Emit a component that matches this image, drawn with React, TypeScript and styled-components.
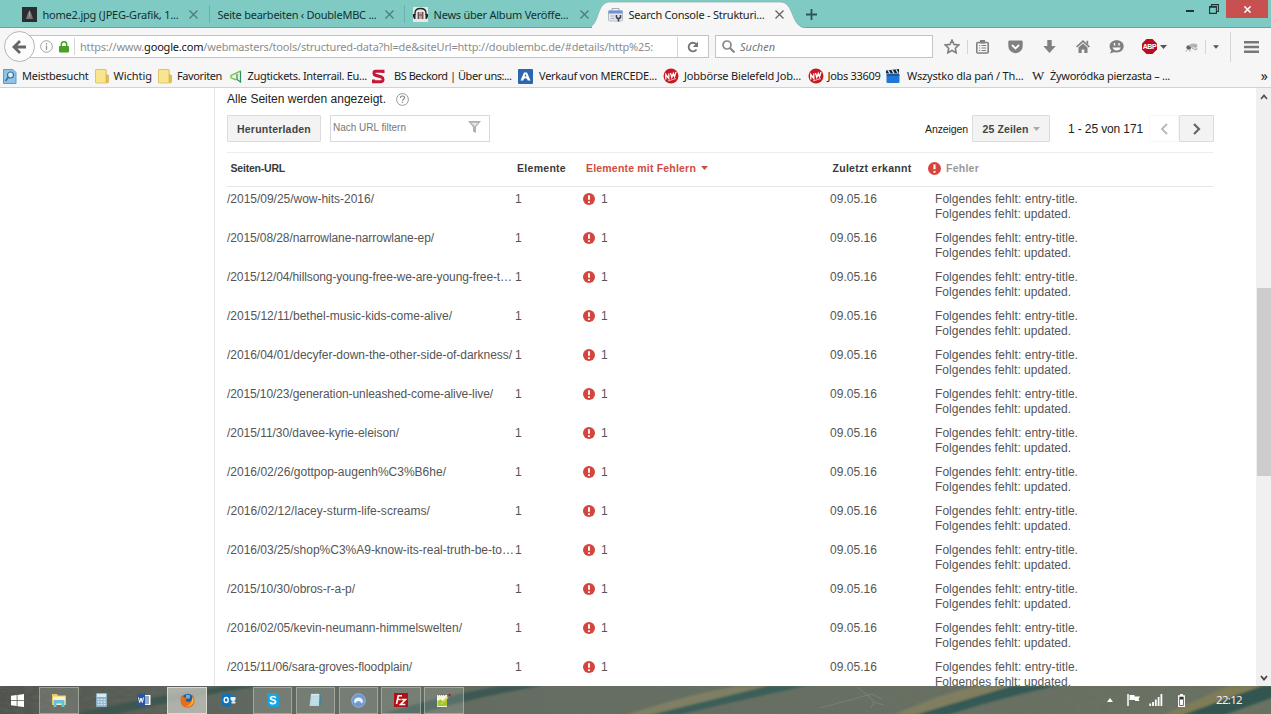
import React, { useLayoutEffect, useRef, useState } from 'react';
import styled, { createGlobalStyle, css } from 'styled-components';

const GlobalStyle = createGlobalStyle`
  * { box-sizing: border-box; }
  html, body { margin: 0; padding: 0; overflow: hidden; background: #fff; }
  svg { display: block; flex: none; }
`;

const ui = `'Noto Sans', 'Open Sans', sans-serif`;
const web = `'Liberation Sans', Arial, sans-serif`;

/* ---------- text that keeps a given run width ---------- */

const Run = styled.span<{ $w: number }>`
  display: block;
  flex: none;
  width: ${p => p.$w}px;
  white-space: pre;
`;

function Fit({ w, children }: { w: number; children: React.ReactNode }) {
  const ref = useRef<HTMLSpanElement>(null);
  const [spacing, setSpacing] = useState(0);
  useLayoutEffect(() => {
    const el = ref.current;
    if (!el) return;
    const range = document.createRange();
    range.selectNodeContents(el);
    const natural = range.getBoundingClientRect().width;
    const count = (el.textContent || '').length;
    if (count > 1) setSpacing(s => s + (w - natural) / count);
  }, [w]);
  return <Run ref={ref} $w={w} style={{ letterSpacing: spacing }}>{children}</Run>;
}

/* ---------- window frame ---------- */

const Window = styled.div`
  width: 1271px;
  height: 714px;
  display: flex;
  flex-direction: column;
  overflow: hidden;
  background: #fff;
`;

const TabStrip = styled.div`
  height: 28px;
  flex: none;
  display: flex;
  background: #7fcbc4;
  border-bottom: 1px solid #68a39e;
  font: 11px/27px ${ui};
  color: #12302e;
`;

const Tab = styled.div<{ $w: number; $pad: number; $line?: boolean }>`
  width: ${p => p.$w}px;
  height: 27px;
  padding: 1px 10px 0 ${p => p.$pad}px;
  display: flex;
  align-items: center;
  ${p => p.$line && css`
    background: linear-gradient(#68b2ac, #68b2ac) right 5px / 1px 18px no-repeat;
  `}
`;

const TabIcon = styled.span`
  width: 20.5px;
  flex: none;
`;

const TabClose = styled.span<{ $gap: number }>`
  margin-left: ${p => p.$gap}px;
`;

const ActiveTab = styled.div`
  width: 214px;
  height: 28px;
  display: grid;
  color: #222;
  > * { grid-area: 1 / 1; }
`;

const ActiveContent = styled.div`
  display: flex;
  align-items: center;
  padding: 0 0 0 16px;
`;

const NewTab = styled.div`
  padding: 9px 0 0 0;
  flex: 1;
`;

const WindowButtons = styled.div`
  display: flex;
  height: 18px;
`;

const WinButton = styled.div<{ $w: number; $close?: boolean }>`
  width: ${p => p.$w}px;
  display: flex;
  align-items: center;
  justify-content: center;
  background: ${p => (p.$close ? '#c75050' : 'transparent')};
`;

/* ---------- toolbar ---------- */

const Toolbar = styled.div`
  height: 37px;
  flex: none;
  display: flex;
  align-items: center;
  background: #f6f6f6;
  padding-left: 4px;
  font: 11px/20px ${ui};
`;

const Back = styled.div`
  width: 31px;
  height: 31px;
  border: 1px solid #b5b5b5;
  border-radius: 50%;
  background: #fcfcfc;
  display: flex;
  align-items: center;
  justify-content: center;
  z-index: 1;
`;

const AddressBar = styled.div`
  width: 682px;
  height: 23px;
  margin-left: -8px;
  padding-left: 12px;
  border: 1px solid #c3c3c3;
  background: #fff;
  display: flex;
  align-items: center;
  color: #8d8d8d;
  b { font-weight: 400; color: #111; }
`;

const Divider = styled.span<{ $h: number; $m?: string }>`
  width: 1px;
  height: ${p => p.$h}px;
  margin: ${p => p.$m || '0'};
  background: #d5d5d5;
  flex: none;
`;

const Search = styled.div`
  width: 218px;
  height: 23px;
  margin: 0 4px 0 6px;
  padding-left: 6px;
  border: 1px solid #c3c3c3;
  background: #fff;
  display: flex;
  align-items: center;
  gap: 5px;
  color: #757575;
  font-style: italic;
`;

const Slot = styled.div<{ $w: number; $gap?: number }>`
  width: ${p => p.$w}px;
  display: flex;
  align-items: center;
  justify-content: center;
  gap: ${p => p.$gap || 0}px;
  flex: none;
`;

const Badge = styled.span`
  width: 15px;
  height: 15px;
  background: #bb0d1c;
  color: #fff;
  font: 700 7px/15px ${web};
  letter-spacing: -0.4px;
  text-align: center;
  clip-path: polygon(30% 0, 70% 0, 100% 30%, 100% 70%, 70% 100%, 30% 100%, 0 70%, 0 30%);
`;

/* ---------- bookmarks ---------- */

const Bookmarks = styled.div`
  height: 23px;
  flex: none;
  display: flex;
  align-items: center;
  padding-left: 3px;
  background: #f6f6f6;
  border-bottom: 1px solid #d2d2d2;
  font: 11px/20px ${ui};
  color: #1c1c1c;
`;

const Bookmark = styled.div<{ $w: number }>`
  width: ${p => p.$w}px;
  flex: none;
  display: flex;
  align-items: center;
`;

const BookmarkIcon = styled.span<{ $w: number }>`
  width: ${p => p.$w}px;
  flex: none;
`;

const More = styled.span`
  margin-left: auto;
  padding-right: 3px;
  font-size: 14px;
`;

/* ---------- page ---------- */

const Page = styled.div`
  height: 598px;
  flex: none;
  display: flex;
  overflow: hidden;
  font-family: ${web};
`;

const Sidebar = styled.div`
  width: 215px;
  border-right: 1px solid #e6e6e6;
`;

const Main = styled.div`
  width: 1041px;
  padding: 2px 0 0 12px;
`;

const Intro = styled.div`
  height: 18px;
  display: flex;
  align-items: center;
  gap: 10px;
  font-size: 12px;
  color: #222;
`;

const Controls = styled.div`
  height: 43px;
  width: 987px;
  display: flex;
  align-items: center;
  padding-bottom: 2px;
  font-size: 10.5px;
  color: #222;
`;

const Button = styled.div<{ $w: number; $plain?: boolean }>`
  width: ${p => p.$w}px;
  height: 27px;
  flex: none;
  display: flex;
  align-items: center;
  justify-content: center;
  gap: 4px;
  border: 1px solid ${p => (p.$plain ? '#f7f7f7' : '#dcdcdc')};
  border-radius: 1px;
  background: ${p => (p.$plain ? '#fff' : '#f3f3f3')};
  font-weight: 700;
  color: #444;
`;

const Filter = styled.div`
  width: 160px;
  height: 27px;
  margin-left: 9px;
  padding: 0 8px 3px 2px;
  display: flex;
  align-items: center;
  justify-content: space-between;
  border: 1px solid #d9d9d9;
  font-size: 10px;
  color: #777;
`;

const Pager = styled.div`
  margin-left: auto;
  display: flex;
  align-items: center;
`;

const Count = styled.div`
  margin: 0 6px 0 18px;
  font-size: 12px;
`;

const columns = '288px 67px 248px 104px 1fr';

const TableHead = styled.div`
  width: 986px;
  height: 35px;
  margin-top: 1px;
  padding-bottom: 3px;
  display: grid;
  grid-template-columns: ${columns};
  align-items: center;
  border-top: 1px solid #ececec;
  border-bottom: 1px solid #e6e6e6;
  font-size: 10.5px;
  font-weight: 700;
  color: #3a3a3a;
`;

const HeadCell = styled.div<{ $pad: number; $color?: string }>`
  display: flex;
  align-items: center;
  gap: 5px;
  padding-left: ${p => p.$pad}px;
  color: ${p => p.$color || 'inherit'};
`;

const ErrorHead = styled(HeadCell)`
  margin-left: -6px;
`;

const Rows = styled.div`
  padding-top: 4.6px;
`;

const Row = styled.div`
  height: 39px;
  display: grid;
  grid-template-columns: ${columns};
  font-size: 12px;
  line-height: 15px;
  color: #555;
`;

const Cell = styled.div<{ $pad?: number }>`
  padding-left: ${p => p.$pad || 0}px;
`;

const ErrorCount = styled.div`
  height: 15px;
  display: flex;
  align-items: center;
  gap: 6px;
  padding-left: 1px;
`;

const Scrollbar = styled.div`
  width: 15px;
  background: #f0f0f0;
  display: flex;
  flex-direction: column;
  align-items: center;
  padding: 6px 0 5px;
`;

const Track = styled.div`
  flex: 1;
  width: 14px;
  padding-top: 188px;
`;

const Thumb = styled.div`
  height: 188px;
  background: #cdcdcd;
`;

/* ---------- taskbar ---------- */

const Taskbar = styled.div`
  height: 28px;
  flex: none;
  display: grid;
  > * { grid-area: 1 / 1; min-width: 0; }
`;

const TaskContent = styled.div`
  display: flex;
  align-items: center;
  z-index: 1;
`;

const Task = styled.div<{ $state?: 'open' | 'active' }>`
  width: 39.5px;
  height: 27px;
  margin-right: 3.3px;
  flex: none;
  display: flex;
  align-items: center;
  justify-content: center;
  border: 1px solid transparent;
  ${p => p.$state === 'open' && css`
    border-color: rgba(205, 209, 200, 0.5);
    background: rgba(190, 195, 185, 0.22);
  `}
  ${p => p.$state === 'active' && css`
    border-color: #dad9d2;
    background: rgba(215, 213, 205, 0.68);
  `}
`;

const Start = styled.div`
  width: 39px;
  padding-left: 10.5px;
`;

const Tray = styled.div`
  margin-left: auto;
  display: flex;
  align-items: center;
  color: #f2f2f2;
  font: 11.5px/28px ${ui};
`;

const TrayItem = styled.div<{ $l: number }>`
  margin-left: ${p => p.$l}px;
`;

/* ---------- drawings ---------- */

const Cross = ({ c = '#4f7d79', s = 9, sw = 1.3 }: { c?: string; s?: number; sw?: number }) => (
  <svg width={s} height={s} viewBox="0 0 9 9"><path d="M.5.5l8 8M8.5.5l-8 8" stroke={c} strokeWidth={sw} /></svg>
);

const Alert = ({ s = 12 }: { s?: number }) => (
  <svg width={s} height={s} viewBox="0 0 12 12">
    <circle cx="6" cy="6" r="6" fill="#d5453d" />
    <path d="M6 2.2v4.6M6 8.2v1.8" stroke="#fff" strokeWidth="1.9" />
  </svg>
);

const Caret = ({ c = '#555', w = 7 }: { c?: string; w?: number }) => (
  <svg width={w} height="4" viewBox="0 0 7 4"><path d="M0 0h7L3.5 4z" fill={c} /></svg>
);

const Folder = () => (
  <svg width="14" height="15" viewBox="0 0 14 15">
    <path d="M1 .8h10v13h1.500q1 0 1-1V6.500l-2-1" fill="#e2bd50" stroke="#d2ae48" strokeWidth=".7" />
    <path d="M.5 1q0-.6.6-.6h9.400q.5 0 .5.600v12.500q0 .5-.5.500H1.100q-.6 0-.6-.6z" fill="#f8e68f" stroke="#d8bb55" strokeWidth=".8" />
  </svg>
);

const Press = () => (
  <svg width="16" height="16" viewBox="0 0 16 16">
    <circle cx="8" cy="8" r="7.500" fill="#c81923" />
    <path d="M2.800 11.500V6.500l3 4V5.500M7.500 5l1.300 4.500L10.300 5.500l1.200 3.300L13 4" fill="none" stroke="#fff" strokeWidth="1.300" />
    <path d="M5 13l8-2.500" stroke="#fff" strokeWidth=".7" />
  </svg>
);

const icons = {
  most: (
    <svg width="14" height="15" viewBox="0 0 14 15">
      <path d="M.5.5h9.500l3 3v11H.5z" fill="#8cc3e6" stroke="#5d9bc4" />
      <circle cx="7.500" cy="6" r="3" fill="#d9effb" stroke="#3a6f9c" strokeWidth="1.200" />
      <path d="M5.500 8l-3 4" stroke="#3a6f9c" strokeWidth="1.600" />
    </svg>
  ),
  rail: (
    <svg width="12" height="13" viewBox="0 0 12 13">
      <path d="M11 1L1 5.500v2.500L11 12z" fill="#e4f5da" />
      <path d="M11 .8L1 5.500v2.300l5 2" fill="none" stroke="#6fbf4b" strokeWidth="1.300" />
      <path d="M10.500 1.500v10.500L7 9.500V4" fill="none" stroke="#2c8f68" strokeWidth="1.200" />
    </svg>
  ),
  bs: (
    <svg width="13" height="15" viewBox="0 0 13 15">
      <path d="M11 4V2.200H3.500Q2 2.200 2 4t1.500 2.200L9.500 8Q11 8.500 11 10.500t-2 2.300H1.500V10.500" fill="none" stroke="#c5163a" strokeWidth="3" />
    </svg>
  ),
  auto: (
    <svg width="15" height="15" viewBox="0 0 15 15">
      <rect width="15" height="15" rx="1" fill="#2d66ae" />
      <path d="M2.500 11.500L6 3.500h3l3.500 8h-2.800L9 9.800Q7.500 8.500 6 9.800l-.7 1.700z" fill="#fff" />
      <path d="M6.500 7.500h2L7.500 5z" fill="#2d66ae" />
    </svg>
  ),
  nw: <Press />,
  clap: (
    <svg width="14" height="14" viewBox="0 0 14 14">
      <rect x=".5" y="5" width="13" height="9" rx="1" fill="#2277d5" />
      <path d="M0 1.500L13 0v4.500H0z" fill="#15233a" />
      <path d="M2 1.300l2 3M6 .9l2 3.400M10 .5l2 3.500" stroke="#dbe8f5" strokeWidth="1.300" />
      <path d="M.5 6h13" stroke="#173d70" />
    </svg>
  ),
  folder: <Folder />,
};

const bookmarks: { icon?: keyof typeof icons; text: string; w: number; off: number; tw: number }[] = [
  { icon: 'most', text: 'Meistbesucht', w: 92, off: 19, tw: 66.5 },
  { icon: 'folder', text: 'Wichtig', w: 63, off: 18.5, tw: 38.500 },
  { icon: 'folder', text: 'Favoriten', w: 72, off: 19, tw: 45 },
  { icon: 'rail', text: 'Zugtickets. Interrail. Eu...', w: 142, off: 17.500, tw: 119.500 },
  { icon: 'bs', text: 'BS Beckord | Über uns:...', w: 146, off: 22, tw: 117.500 },
  { icon: 'auto', text: 'Verkauf von MERCEDE...', w: 145, off: 21, tw: 118 },
  { icon: 'nw', text: 'Jobbörse Bielefeld Job...', w: 145, off: 21, tw: 117 },
  { icon: 'nw', text: 'Jobs 33609', w: 78, off: 19.500, tw: 53 },
  { icon: 'clap', text: 'Wszystko dla pań / Th...', w: 146, off: 21, tw: 116.500 },
  { text: 'Żyworódka pierzasta – ...', w: 150, off: 18, tw: 120 },
];

const Wiki = styled.span`
  font: 13px/18px 'Liberation Serif', serif;
`;

const rows: [string, number][] = [
  ['/2015/09/25/wow-hits-2016/', 147],
  ['/2015/08/28/narrowlane-narrowlane-ep/', 207],
  ['/2015/12/04/hillsong-young-free-we-are-young-free-t…', 285],
  ['/2015/12/11/bethel-music-kids-come-alive/', 225],
  ['/2016/04/01/decyfer-down-the-other-side-of-darkness/', 285],
  ['/2015/10/23/generation-unleashed-come-alive-live/', 266],
  ['/2015/11/30/davee-kyrie-eleison/', 172],
  ['/2016/02/26/gottpop-augenh%C3%B6he/', 219],
  ['/2016/02/12/lacey-sturm-life-screams/', 203],
  ['/2016/03/25/shop%C3%A9-know-its-real-truth-be-to…', 287],
  ['/2015/10/30/obros-r-a-p/', 128],
  ['/2016/02/05/kevin-neumann-himmelswelten/', 235],
  ['/2015/11/06/sara-groves-floodplain/', 185],
];

const Road = () => (
  <svg width="1271" height="28" viewBox="0 0 1271 28">
    <defs>
      <linearGradient id="ground">
        <stop offset="0" stopColor="#50544d" />
        <stop offset=".2" stopColor="#60685f" />
        <stop offset=".45" stopColor="#666e63" />
        <stop offset="1" stopColor="#6a7262" />
      </linearGradient>
      <filter id="soft" x="-5%" y="-20%" width="110%" height="140%"><feGaussianBlur stdDeviation="1.300" /></filter>
      <filter id="grain">
        <feTurbulence type="fractalNoise" baseFrequency=".12 .3" numOctaves="3" seed="4" />
        <feColorMatrix values="0 0 0 0 .12  0 0 0 0 .15  0 0 0 0 .12  .9 0 0 0 -.35" />
      </filter>
    </defs>
    <rect width="1271" height="28" fill="url(#ground)" />
    <rect width="1271" height="28" filter="url(#grain)" />
    <g filter="url(#soft)">
      <path d="M70 29Q150 10 225 0h36Q190 10 112 29z" fill="#3d5650" />
      <path d="M378 29Q440 10 500 0h41Q480 10 415 29z" fill="#3d5952" />
      <path d="M625 29Q690 8 737 0h32L651 29z" fill="#7f7f63" />
      <path d="M650 29L768 0h38Q740 14 678 29z" fill="#3a5f58" />
      <path d="M893 29Q940 8 976 0h36L917 29z" fill="#7f7e60" />
      <path d="M915 29L1012 0h44Q1000 12 947 29z" fill="#365a54" />
      <path d="M1163 29L1228 0h36L1184 29z" fill="#7f7c59" />
      <path d="M1182 29L1262 0h12v11l-50 18z" fill="#33574f" />
    </g>
    <path d="M857 1l17 14-3 7M820 22l52-14 10 5M873 16l11 3" stroke="#84968e" strokeWidth="1" fill="none" opacity=".45" />
  </svg>
);

export default function App() {
  return (
    <Window>
      <GlobalStyle />
      <TabStrip>
        <Tab $w={210} $pad={22} $line>
          <TabIcon>
            <svg width="15" height="15" viewBox="0 0 15 15">
              <rect width="15" height="15" fill="#2b2e30" />
              <path d="M7.500 3l2 4 1.500 5H4l1.500-5z" fill="#777" />
              <path d="M7.500 4v6" stroke="#b39b98" />
            </svg>
          </TabIcon>
          <Fit w={136}>home2.jpg (JPEG-Grafik, 1...</Fit>
          <TabClose $gap={10.5}><Cross /></TabClose>
        </Tab>
        <Tab $w={195} $pad={7.5} $line>
          <Fit w={159}>Seite bearbeiten ‹ DoubleMBC ...</Fit>
          <TabClose $gap={8}><Cross /></TabClose>
        </Tab>
        <Tab $w={187} $pad={8}>
          <TabIcon>
            <svg width="15" height="15" viewBox="0 0 15 15">
              <rect width="15" height="15" fill="#e9e6e6" />
              <path d="M2 8V6q0-4.500 5.500-4.500T13 6v2" fill="none" stroke="#222" strokeWidth="1.300" />
              <path d="M0 7h2.500v5H1.500Q0 11 0 9zM15 7h-2.500v5h1Q15 11 15 9z" fill="#222" />
              <path d="M4 5h7v7H4z" fill="#b9a4a3" />
              <path d="M5.500 5v7M9.500 5v7M5.500 8h4" stroke="#6d5453" />
            </svg>
          </TabIcon>
          <Fit w={135}>News über Album Veröffe...</Fit>
          <TabClose $gap={11}><Cross /></TabClose>
        </Tab>
        <ActiveTab>
          <svg width="216" height="28" viewBox="0 0 216 28">
            <path d="M-6 28C9 28 3 2 18 2H188C203 2 198 28 214 28z" fill="#f6f6f6" />
            <path d="M-6 27.500C9 27.500 3 2 18 2H188C203 2 198 27.500 214 27.500" fill="none" stroke="#8eb5b1" strokeWidth=".8" />
          </svg>
          <ActiveContent>
            <TabIcon>
              <svg width="15" height="15" viewBox="0 0 15 15">
                <path d="M4 4V1.500h7V4" stroke="#a4abb4" fill="none" />
                <rect x=".5" y="4" width="14" height="10" rx="1" fill="#e5e9ef" stroke="#b4bdc9" />
                <path d="M.5 3.500h14v3H.5z" fill="#6f93d2" />
                <path d="M2.500 9h4M2.500 11.500h4" stroke="#a5b0c0" />
                <path d="M8.500 8v2.500l2 1.500 2-1.500V8M10.500 12v2.500" stroke="#444" strokeWidth="1.600" fill="none" />
              </svg>
            </TabIcon>
            <Fit w={136}>Search Console - Strukturi...</Fit>
            <TabClose $gap={10.5}><Cross c="#666" /></TabClose>
          </ActiveContent>
        </ActiveTab>
        <NewTab>
          <svg width="11" height="11" viewBox="0 0 11 11"><path d="M5.500 0v11M0 5.500h11" stroke="#2f5552" strokeWidth="1.800" /></svg>
        </NewTab>
        <WindowButtons>
          <WinButton $w={25}>
            <svg width="8" height="6" viewBox="0 0 8 6"><path d="M0 5h8" stroke="#1d3634" strokeWidth="2" /></svg>
          </WinButton>
          <WinButton $w={24}>
            <svg width="10" height="10" viewBox="0 0 10 10">
              <path d="M.6 2.600h6.800v6.800H.6zM2.500 2.500V.6h6.900v6.900H7.500M.6 3.200h6.800" fill="none" stroke="#1d3634" strokeWidth="1.100" />
            </svg>
          </WinButton>
          <WinButton $w={42} $close><Cross c="#fff" s={7} sw={2} /></WinButton>
          <WinButton $w={3} />
        </WindowButtons>
      </TabStrip>

      <Toolbar>
        <Back>
          <svg width="15" height="14" viewBox="0 0 15 14"><path d="M8 1L2 7l6 6M2.500 7H14" fill="none" stroke="#666" strokeWidth="2.800" /></svg>
        </Back>
        <AddressBar>
          <svg width="13" height="13" viewBox="0 0 13 13">
            <circle cx="6.500" cy="6.500" r="5.800" fill="none" stroke="#a2a2a2" />
            <path d="M6.500 5.500V10M6.500 3v1.500" stroke="#999" strokeWidth="1.300" />
          </svg>
          <Slot $w={21}>
            <svg width="10" height="12" viewBox="0 0 10 12">
              <path d="M2.300 6V3.500a2.700 2.700 0 015.400 0V6" fill="none" stroke="#49a226" strokeWidth="1.500" />
              <rect y="5" width="10" height="6.500" rx="1" fill="#49a226" />
            </svg>
          </Slot>
          <Divider $h={17} $m="0 5px 0 0" />
          <Fit w={573}>https://www.<b>google.com</b>/webmasters/tools/structured-data?hl=de&amp;siteUrl=http://doublembc.de/#details/http%25:</Fit>
          <Divider $h={20} $m="0 9px 0 auto" />
          <svg width="12" height="12" viewBox="0 0 12 12">
            <path d="M9.500 8.500A4.300 4.300 0 119 3" fill="none" stroke="#757575" strokeWidth="1.800" />
            <path d="M11 .5V6H5.800z" fill="#757575" />
          </svg>
          <Slot $w={9} />
        </AddressBar>
        <Search>
          <svg width="13" height="13" viewBox="0 0 13 13">
            <circle cx="5" cy="5" r="4" fill="none" stroke="#888" strokeWidth="1.700" />
            <path d="M8 8l4.500 4.500" stroke="#888" strokeWidth="2.200" />
          </svg>
          <Fit w={35}>Suchen</Fit>
        </Search>
        <Slot $w={30}>
          <svg width="16" height="15" viewBox="0 0 16 15"><path d="M8 1.200l2 4.200 4.700.6-3.400 3.200.9 4.600L8 11.500l-4.200 2.300.9-4.600L1.300 6 6 5.400z" fill="none" stroke="#808080" strokeWidth="1.600" /></svg>
        </Slot>
        <Divider $h={14} />
        <Slot $w={29}>
          <svg width="13" height="14" viewBox="0 0 13 14">
            <rect x=".8" y="2.500" width="11.400" height="10.500" rx="1" fill="none" stroke="#808080" strokeWidth="1.600" />
            <path d="M4 0h5v3.500H4z" fill="#808080" />
            <path d="M3 5.500h1.200M5.500 5.500h4.700M3 8h1.200M5.500 8h4.700M3 10.500h1.200M5.500 10.500h4.700" stroke="#808080" strokeWidth="1.200" />
          </svg>
        </Slot>
        <Slot $w={37}>
          <svg width="15" height="14" viewBox="0 0 15 14">
            <path d="M1.500.5h12q1.200 0 1.200 1.200V6a7.200 7.200 0 01-14.400 0V1.700Q.3.5 1.500.5z" fill="#808080" />
            <path d="M4 5l3.500 3.500L11 5" fill="none" stroke="#fff" strokeWidth="1.800" />
          </svg>
        </Slot>
        <Slot $w={30}>
          <svg width="13" height="13" viewBox="0 0 13 13"><path d="M4.300 0h4.400v6h4L6.500 13 .3 6h4z" fill="#808080" /></svg>
        </Slot>
        <Slot $w={37}>
          <svg width="14" height="13" viewBox="0 0 14 13">
            <path d="M7 0l7 6.500-1.200 1.100L7 2.300 1.200 7.600 0 6.500z" fill="#808080" />
            <path d="M2.500 7.500L7 3.500l4.500 4V13H8.300V9.500H5.700V13H2.500zM10.500.8h1.700v4l-1.700-1.500z" fill="#808080" />
          </svg>
        </Slot>
        <Slot $w={30}>
          <svg width="15" height="14" viewBox="0 0 15 14">
            <path d="M7.700.3c4 0 7 2.500 7 6s-3 6.200-7 6.200c-1 0-2-.1-2.800-.5-1.500 1-3 1.400-4.400 1.300 1-.7 1.700-1.800 1.800-2.800C1.200 9.400.6 8 .6 6.300c0-3.500 3-6 7.100-6z" fill="#808080" />
            <path d="M5.500 3v2.500M10 3v2.500" stroke="#fff" strokeWidth="1.400" />
            <path d="M3.500 7.500h8.300q-1 3-4.100 3t-4.200-3z" fill="#fff" />
          </svg>
        </Slot>
        <Slot $w={47} $gap={3}>
          <Badge>ABP</Badge>
          <Caret />
        </Slot>
        <Slot $w={27}>
          <svg width="14" height="12" viewBox="0 0 14 12">
            <ellipse cx="3.800" cy="6.500" rx="2.500" ry="2.300" fill="#666" />
            <ellipse cx="8.500" cy="4.500" rx="4" ry="2" fill="#b5b5b5" />
            <path d="M2 9l-1 1.500M5 9v1.500M7 7l4 2M10 5l2 4" stroke="#999" strokeWidth=".9" />
          </svg>
        </Slot>
        <Divider $h={14} />
        <Slot $w={20}><Caret w={6} /></Slot>
        <Divider $h={30} $m="0 0 0 4px" />
        <Slot $w={40}>
          <svg width="15" height="12" viewBox="0 0 15 12"><path d="M0 1.300h15M0 6h15M0 10.700h15" stroke="#777" strokeWidth="2.400" /></svg>
        </Slot>
      </Toolbar>

      <Bookmarks>
        {bookmarks.map(b => (
          <Bookmark key={b.text} $w={b.w}>
            <BookmarkIcon $w={b.off}>{b.icon ? icons[b.icon] : <Wiki>W</Wiki>}</BookmarkIcon>
            <Fit w={b.tw}>{b.text}</Fit>
          </Bookmark>
        ))}
        <More>»</More>
      </Bookmarks>

      <Page>
        <Sidebar />
        <Main>
          <Intro>
            <Fit w={159}>Alle Seiten werden angezeigt.</Fit>
            <svg width="13" height="13" viewBox="0 0 13 13">
              <circle cx="6.500" cy="6.500" r="5.900" fill="none" stroke="#999" />
              <path d="M4.500 5q0-2 2-2t2 1.800q0 .8-1 1.400t-1 1.600M6.500 8.700V10" fill="none" stroke="#888" strokeWidth="1.200" />
            </svg>
          </Intro>
          <Controls>
            <Button $w={94}><Fit w={74}>Herunterladen</Fit></Button>
            <Filter>
              <Fit w={73}>Nach URL filtern</Fit>
              <svg width="13" height="12" viewBox="0 0 13 12"><path d="M0 0h13L8 6v6l-3-1.500V6z" fill="#b0b0b0" /><path d="M3 1.800h7L7 5.500z" fill="#e6e6e6" /></svg>
            </Filter>
            <Pager>
              <Fit w={43}>Anzeigen</Fit>
              <Slot $w={4} />
              <Button $w={78}><Fit w={46}>25 Zeilen</Fit><Caret c="#aaa" /></Button>
              <Count><Fit w={75}>1 - 25 von 171</Fit></Count>
              <Button $w={30} $plain>
                <svg width="8" height="12" viewBox="0 0 8 12"><path d="M7 1L2 6l5 5" fill="none" stroke="#bbb" strokeWidth="2" /></svg>
              </Button>
              <Button $w={35}>
                <svg width="8" height="12" viewBox="0 0 8 12"><path d="M1 1l5 5-5 5" fill="none" stroke="#666" strokeWidth="2.200" /></svg>
              </Button>
            </Pager>
          </Controls>
          <TableHead>
            <HeadCell $pad={3.5}><Fit w={54.5}>Seiten-URL</Fit></HeadCell>
            <HeadCell $pad={2}><Fit w={49}>Elemente</Fit></HeadCell>
            <HeadCell $pad={4} $color="#d14b40"><Fit w={110}>Elemente mit Fehlern</Fit><Caret c="#d14b40" /></HeadCell>
            <HeadCell $pad={2.5}><Fit w={79}>Zuletzt erkannt</Fit></HeadCell>
            <ErrorHead $pad={0} $color="#999"><Alert s={13} /><Fit w={33}>Fehler</Fit></ErrorHead>
          </TableHead>
          <Rows>
            {rows.map(([url, w]) => (
              <Row key={url}>
                <Cell><Fit w={w}>{url}</Fit></Cell>
                <Cell>1</Cell>
                <ErrorCount><Alert />1</ErrorCount>
                <Cell><Fit w={47}>09.05.16</Fit></Cell>
                <Cell $pad={1}>
                  <Fit w={143}>Folgendes fehlt: entry-title.</Fit>
                  <Fit w={136}>Folgendes fehlt: updated.</Fit>
                </Cell>
              </Row>
            ))}
          </Rows>
        </Main>
        <Scrollbar>
          <svg width="8" height="6" viewBox="0 0 8 6"><path d="M1 5l3-3.500L7 5" fill="none" stroke="#555" strokeWidth="1.800" /></svg>
          <Track><Thumb /></Track>
          <svg width="8" height="6" viewBox="0 0 8 6"><path d="M1 1l3 3.500L7 1" fill="none" stroke="#444" strokeWidth="1.800" /></svg>
        </Scrollbar>
      </Page>

      <Taskbar>
        <Road />
        <TaskContent>
          <Start>
            <svg width="13" height="13" viewBox="0 0 13 13"><path d="M0 1.800l5.700-.8v5.200H0zM6.500.9L13 0v6.200H6.500zM0 7h5.700v5.100L0 11.300zM6.500 7H13v6l-6.500-.8z" fill="#fff" /></svg>
          </Start>
          <Task $state="open">
            <svg width="16" height="14" viewBox="0 0 16 14">
              <path d="M1 1h5l1 1.500h8V12H1z" fill="#e9c96a" />
              <path d="M2 3.500h12V12H2z" fill="#fbf2bd" />
              <path d="M2.500 14V8q0-1 1-1h9q1 0 1 1v6h-3v-3.500h-5V14z" fill="#67bfdc" />
            </svg>
          </Task>
          <Task>
            <svg width="11" height="14" viewBox="0 0 11 14">
              <rect width="11" height="14" rx="1" fill="#8ab1c3" />
              <rect x="1" y="1" width="9" height="3" fill="#d8edf2" />
              <path d="M1.500 6.500h8M1.500 9h8M1.500 11.500h8" stroke="#dbe9ee" strokeWidth="1.500" strokeDasharray="2 1" />
            </svg>
          </Task>
          <Task>
            <svg width="14" height="14" viewBox="0 0 14 14">
              <path d="M7 2h6.500v10H7z" fill="#fff" />
              <path d="M8 4h4M8 6h4M8 8h4M8 10h4" stroke="#2b579a" />
              <path d="M0 1.500L8 0v14l-8-1.500z" fill="#2b579a" />
              <path d="M1.500 4.500l1.200 5L4 5l1.300 4.500 1.200-5" fill="none" stroke="#fff" />
            </svg>
          </Task>
          <Task $state="active">
            <svg width="15" height="15" viewBox="0 0 15 15">
              <circle cx="7.800" cy="7" r="6.300" fill="#245d9b" />
              <path d="M6 2q3-1 4.500 1L9 6 6 5z" fill="#65b4dc" />
              <path d="M1 2.500Q3 3 4.500 4.500L7 5 5.500 7q1 2.500 4 2 3-.8 2.500-6 3 2.500 2.500 6-1 5.700-7 5.700-6.500-.5-7-6.500 0-3 .5-5.700z" fill="#e66f1e" />
              <path d="M12.500 4q2 3 .3 6.500Q10 14 6 13q6-.5 6.500-9z" fill="#f7bb37" />
            </svg>
          </Task>
          <Task>
            <svg width="15" height="14" viewBox="0 0 15 14">
              <path d="M0 1.500L8.500 0v14L0 12.500z" fill="#0872c4" />
              <path d="M8.500 3H14v8H8.500z" fill="#0872c4" />
              <ellipse cx="4.200" cy="7" rx="2" ry="2.500" fill="none" stroke="#fff" strokeWidth="1.400" />
              <path d="M8.500 4h5v3l-2 1.500L8.500 7zM9.500 8.500h4v2h-4z" fill="#e7f2fa" />
            </svg>
          </Task>
          <Task $state="open">
            <svg width="14" height="14" viewBox="0 0 14 14">
              <path d="M1 0h10v1.500q2 1 2 3.500v5q1 4-2 4H4q0-1-2-2V5q-2-3-1-5z" fill="#14a5e3" />
              <path d="M9.700 4.800Q9 3.500 7 3.500T4.500 5q0 1.300 2.500 1.800T9.600 9Q9.500 10.600 7 10.600T4.200 9" fill="none" stroke="#fff" strokeWidth="1.700" />
            </svg>
          </Task>
          <Task $state="open">
            <svg width="13" height="14" viewBox="0 0 13 14">
              <path d="M2 1h10.500L11 13H.5z" fill="#b7dce5" />
              <path d="M10.500 1h2L12 13h-2z" fill="#4c8191" />
              <path d="M2.500 1.500h8" stroke="#f5fafb" strokeWidth="1.500" strokeDasharray="1 1" />
              <path d="M3 5h6M2.800 7.500h6M2.600 10h6" stroke="#c9e5ec" />
            </svg>
          </Task>
          <Task $state="open">
            <svg width="15" height="15" viewBox="0 0 15 15">
              <circle cx="7.500" cy="7.500" r="6.800" fill="#6f98cd" stroke="#92b5dc" />
              <path d="M3 9q0-4.500 4.500-4.500T12 9l-1.500 1.500Q10 8 7.500 8t-3 2.500z" fill="#e9f2fb" />
            </svg>
          </Task>
          <Task $state="open">
            <svg width="14" height="14" viewBox="0 0 14 14">
              <rect width="14" height="14" fill="#ae1217" />
              <path d="M8 2.800H4.300L2.500 11M3.500 6.500h3.200M7.500 6.500h4l-5 5h4.800" fill="none" stroke="#fff" strokeWidth="1.600" />
            </svg>
          </Task>
          <Task $state="open">
            <svg width="15" height="15" viewBox="0 0 15 15">
              <path d="M1 2h10v12H1z" fill="#f3f5df" />
              <path d="M2 2h8" stroke="#666" strokeDasharray="1 1" />
              <path d="M1.500 8l3-1.500L7 8l4-2v7H1.500z" fill="#9fc830" />
              <path d="M5 11l7-7" stroke="#eac743" strokeWidth="1.700" />
              <circle cx="13.500" cy="2" r="1.200" fill="#a61920" />
            </svg>
          </Task>
          <Tray>
            <TrayItem $l={0}><svg width="6" height="4" viewBox="0 0 6 4"><path d="M0 4l3-4 3 4z" fill="#fff" /></svg></TrayItem>
            <TrayItem $l={14}>
              <svg width="13" height="12" viewBox="0 0 13 12"><path d="M1 0v12" stroke="#fff" strokeWidth="1.500" /><path d="M2.500 1h5v1.500H13L11.500 5 12.500 7H8V6H2.500z" fill="#fff" /></svg>
            </TrayItem>
            <TrayItem $l={9}>
              <svg width="14" height="12" viewBox="0 0 14 12"><path d="M1.200 12V9.500M4 12V8M6.800 12V5.500M9.600 12V3M12.400 12V0" stroke="#fff" strokeWidth="1.800" /></svg>
            </TrayItem>
            <TrayItem $l={15}>
              <svg width="7" height="13" viewBox="0 0 7 13"><path d="M.7 2h5.600v10.300H.7z" fill="#30342f" stroke="#fff" strokeWidth="1.300" /><path d="M2 0h3v2H2zM2 5.500h3V11H2z" fill="#fff" /></svg>
            </TrayItem>
            <TrayItem $l={31}><Fit w={26}>22:12</Fit></TrayItem>
            <Slot $w={29} />
          </Tray>
        </TaskContent>
      </Taskbar>
    </Window>
  );
}
